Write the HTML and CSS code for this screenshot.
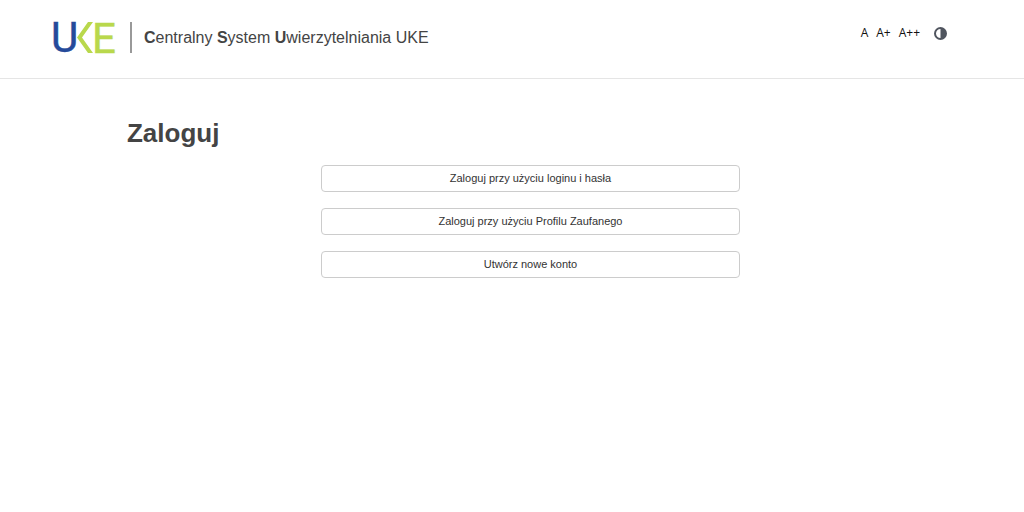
FILE: index.html
```html
<!DOCTYPE html>
<html lang="pl">
<head>
<meta charset="utf-8">
<meta name="viewport" content="width=device-width, initial-scale=1">
<title>Centralny System Uwierzytelniania UKE</title>
<link rel="stylesheet" href="styles.css">
</head>
<body>
<header class="header">
  <div class="brand">
    <svg class="logo" width="62" height="32" viewBox="0 0 62 32" role="img" aria-label="UKE">
      <text class="logo-blue" x="-2" y="30">U</text>
      <path d="M40 0h-5L24 15.500l11 15.500h5L29 15.500z" fill="#b9d84c"/>
      <text class="logo-green" x="39" y="31">E</text>
    </svg>
    <p class="brand-name"><b>C</b>entralny <b>S</b>ystem <b>U</b>wierzytelniania UKE</p>
  </div>
  <div class="tools">
    <button type="button" class="tool">A</button>
    <button type="button" class="tool">A+</button>
    <button type="button" class="tool">A++</button>
    <button type="button" class="tool contrast" aria-label="Kontrast">
      <svg width="13" height="13" viewBox="0 0 13 13" aria-hidden="true">
        <circle cx="6.500" cy="6.500" r="5.500" fill="none" stroke="#50555f" stroke-width="2"/>
        <path d="M6.500 1a5.500 5.500 0 0 1 0 11z" fill="#50555f"/>
      </svg>
    </button>
  </div>
</header>
<main class="main">
  <h1 class="title">Zaloguj</h1>
  <div class="actions">
    <button type="button" class="action">Zaloguj przy użyciu loginu i hasła</button>
    <button type="button" class="action">Zaloguj przy użyciu Profilu Zaufanego</button>
    <button type="button" class="action">Utwórz nowe konto</button>
  </div>
</main>
</body>
</html>
```
FILE: styles.css
```css
* { box-sizing: border-box; }
body {
  margin: 0;
  background: #fff;
  color: #444;
  font-family: "Liberation Sans", Arial, sans-serif;
}
.header {
  display: flex;
  justify-content: space-between;
  align-items: flex-start;
  padding: 22px 77px 24px 53px;
  border-bottom: 1px solid #e5e5e5;
}
.brand { display: flex; align-items: flex-start; }
.logo { display: block; overflow: visible; }
.logo-blue, .logo-green {
  font-family: Roboto, sans-serif;
  font-size: 42px;
  font-weight: 400;
  stroke-width: 0.500px;
}
.logo-blue { fill: #254a9a; stroke: #254a9a; }
.logo-green { fill: #b9d84c; stroke: #b9d84c; }
.brand-name {
  margin: 0 0 0 15px;
  padding-left: 12px;
  border-left: 2px solid #999;
  font-size: 16px;
  line-height: 31px;
}
.tools {
  display: flex;
  align-items: center;
  gap: 8px;
  padding-top: 3px;
}
.tool {
  padding: 0;
  border: 0;
  background: none;
  color: #111;
  font-family: "Open Sans", sans-serif;
  font-size: 12px;
  line-height: 16px;
  cursor: pointer;
}
.contrast { margin-left: 6px; }
.contrast svg { display: block; }
.main { padding: 36px 12.4%; }
.title {
  margin: 0;
  font-size: 26px;
  line-height: 36px;
}
.actions {
  display: flex;
  flex-direction: column;
  gap: 16px;
  width: 54.400%;
  margin: 14px 0 0 25.200%;
}
.action {
  height: 27px;
  padding: 0 12px 1px;
  border: 1px solid #ccc;
  border-radius: 4px;
  background: #fff;
  color: #333;
  font-family: inherit;
  font-size: 11px;
  cursor: pointer;
}
```
